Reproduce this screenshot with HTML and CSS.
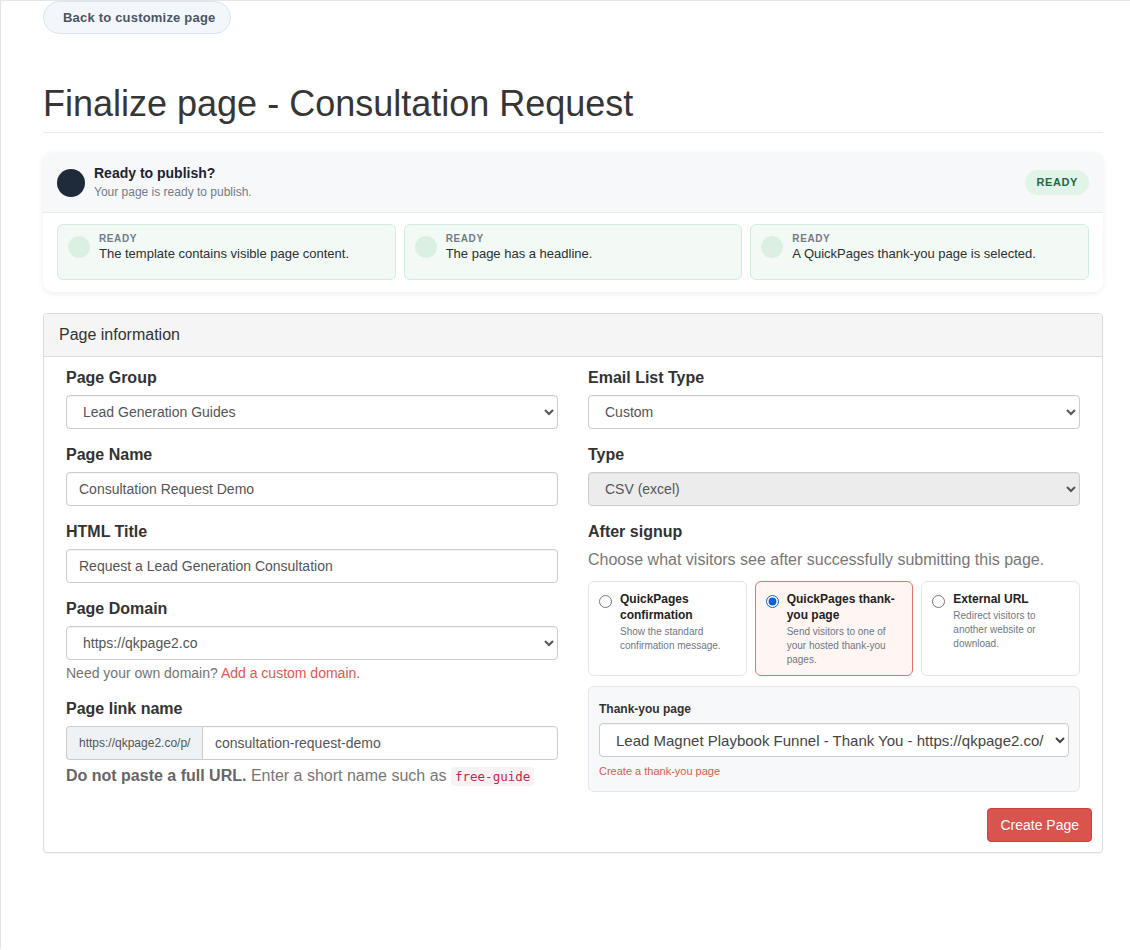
FILE: index.html
```html
<!DOCTYPE html>
<html lang="en">
<head>
  <meta charset="UTF-8">
  <meta name="viewport" content="width=device-width, initial-scale=1.0">
  <title>Finalize page - Consultation Request</title>
  <link rel="stylesheet" href="styles.css">
</head>
<body>
  <div class="container">
    <a class="back-btn" href="#">Back to customize page</a>

    <h1 class="page-title">Finalize page - Consultation Request</h1>

    <!-- publish readiness summary -->
    <div class="publish-card">
      <div class="publish-head">
        <span class="publish-dot"></span>
        <div class="publish-text">
          <div class="publish-title">Ready to publish?</div>
          <div class="publish-sub">Your page is ready to publish.</div>
        </div>
        <span class="badge-ready">READY</span>
      </div>
      <div class="check-list">
        <div class="check-item">
          <span class="check-dot"></span>
          <div>
            <div class="check-state">READY</div>
            <div class="check-msg">The template contains visible page content.</div>
          </div>
        </div>
        <div class="check-item">
          <span class="check-dot"></span>
          <div>
            <div class="check-state">READY</div>
            <div class="check-msg">The page has a headline.</div>
          </div>
        </div>
        <div class="check-item">
          <span class="check-dot"></span>
          <div>
            <div class="check-state">READY</div>
            <div class="check-msg">A QuickPages thank-you page is selected.</div>
          </div>
        </div>
      </div>
    </div>

    <div class="panel">
      <div class="panel-heading">Page information</div>
      <div class="panel-body">
        <div class="form-cols">
          <div class="form-col">
            <div class="form-group">
              <label class="control-label" for="pageGroup">Page Group</label>
              <select id="pageGroup" class="form-control">
                <option>Lead Generation Guides</option>
              </select>
            </div>
            <div class="form-group">
              <label class="control-label" for="pageName">Page Name</label>
              <input id="pageName" class="form-control" type="text" value="Consultation Request Demo">
            </div>
            <div class="form-group">
              <label class="control-label" for="htmlTitle">HTML Title</label>
              <input id="htmlTitle" class="form-control" type="text" value="Request a Lead Generation Consultation">
            </div>
            <div class="form-group">
              <label class="control-label" for="pageDomain">Page Domain</label>
              <select id="pageDomain" class="form-control">
                <option>https://qkpage2.co</option>
              </select>
              <p class="help-block">Need your own domain? <a href="#">Add a custom domain</a>.</p>
            </div>
            <div class="form-group">
              <label class="control-label" for="linkName">Page link name</label>
              <div class="input-group">
                <span class="input-addon">https://qkpage2.co/p/</span>
                <input id="linkName" class="form-control" type="text" value="consultation-request-demo">
              </div>
              <p class="help-link"><strong>Do not paste a full URL.</strong> Enter a short name such as <code>free-guide</code></p>
            </div>
          </div>

          <div class="form-col">
            <div class="form-group">
              <label class="control-label" for="listType">Email List Type</label>
              <select id="listType" class="form-control">
                <option>Custom</option>
              </select>
            </div>
            <div class="form-group">
              <label class="control-label" for="fileType">Type</label>
              <select id="fileType" class="form-control" disabled>
                <option>CSV (excel)</option>
              </select>
            </div>
            <div class="form-group">
              <label class="control-label">After signup</label>
              <p class="after-desc">Choose what visitors see after successfully submitting this page.</p>
              <div class="signup-options">
                <label class="signup-option">
                  <input type="radio" name="after">
                  <span>
                    <span class="option-title">QuickPages confirmation</span>
                    <span class="option-desc">Show the standard confirmation message.</span>
                  </span>
                </label>
                <label class="signup-option selected">
                  <input type="radio" name="after" checked>
                  <span>
                    <span class="option-title">QuickPages thank-you page</span>
                    <span class="option-desc">Send visitors to one of your hosted thank-you pages.</span>
                  </span>
                </label>
                <label class="signup-option">
                  <input type="radio" name="after">
                  <span>
                    <span class="option-title">External URL</span>
                    <span class="option-desc">Redirect visitors to another website or download.</span>
                  </span>
                </label>
              </div>
              <div class="thanks-box">
                <label class="thanks-label" for="thanksPage">Thank-you page</label>
                <select id="thanksPage" class="form-control thanks-select">
                  <option>Lead Magnet Playbook Funnel - Thank You - https://qkpage2.co/p/lead-magnet-playbook-thank-you</option>
                </select>
                <a class="thanks-link" href="#">Create a thank-you page</a>
              </div>
            </div>
          </div>
        </div>
        <div class="form-actions">
          <button class="btn-create" type="button">Create Page</button>
        </div>
      </div>
    </div>
  </div>
</body>
</html>
```

FILE: styles.css
```css
body {
  margin: 0;
  font-family: "Liberation Sans", Arial, sans-serif;
  font-size: 14px;
  color: #333;
  background: #fff;
  border-left: 1px solid #e3e3e3;
  border-top: 1px solid #e6e6e6;
  min-height: 949px;
  box-sizing: border-box;
}
.container {
  width: 1060px;
  margin-left: 42px;
}
.back-btn {
  display: inline-block;
  height: 33px;
  line-height: 31px;
  box-sizing: border-box;
  padding: 0 14px 0 19px;
  border: 1px solid #dbe3ec;
  border-radius: 17px;
  background: #f3f7fb;
  color: #4a5565;
  font-size: 13px;
  font-weight: bold;
  letter-spacing: 0.2px;
  text-decoration: none;
}
.page-title {
  margin: 48px 0 0;
  font-size: 36px;
  font-weight: normal;
  line-height: 44px;
  color: #363636;
  padding-bottom: 6px;
  border-bottom: 1px solid #eaeaea;
}

/* readiness card */
.publish-card {
  margin-top: 20px;
  border-radius: 10px;
  background: #fff;
  box-shadow: 0 1px 6px rgba(0, 0, 0, 0.08);
  overflow: hidden;
}
.publish-head {
  display: flex;
  align-items: center;
  padding: 0 14px;
  height: 59px;
  background: #f7f8fa;
  border-bottom: 1px solid #e6e9ed;
}
.publish-dot {
  width: 28px;
  height: 28px;
  border-radius: 50%;
  background: #1f2a3a;
  margin-right: 9px;
  margin-top: 1px;
}
.publish-text {
  flex: 1;
}
.publish-title {
  font-size: 14px;
  font-weight: bold;
  color: #1d2430;
  line-height: 19px;
}
.publish-sub {
  font-size: 12px;
  color: #737b87;
  line-height: 19px;
}
.badge-ready {
  display: inline-block;
  height: 25px;
  line-height: 25px;
  padding: 0 11px;
  border-radius: 13px;
  background: #e2f3e7;
  color: #22683f;
  font-size: 11px;
  font-weight: bold;
  letter-spacing: 0.6px;
  margin-top: -1px;
}
.check-list {
  display: grid;
  grid-template-columns: repeat(3, 1fr);
  gap: 8px;
  padding: 11px 14px 12px;
}
.check-item {
  display: flex;
  align-items: flex-start;
  height: 56px;
  box-sizing: border-box;
  padding: 8px 10px;
  border: 1px solid #d3ebdb;
  border-radius: 6px;
  background: #f3faf5;
}
.check-dot {
  flex: none;
  width: 22px;
  height: 22px;
  border-radius: 50%;
  background: #dcf0e2;
  margin: 3px 9px 0 0;
}
.check-state {
  font-size: 10px;
  font-weight: bold;
  color: #737b87;
  letter-spacing: 0.6px;
  line-height: 12px;
}
.check-msg {
  font-size: 13px;
  color: #2b2f36;
  line-height: 17px;
}

/* page information panel */
.panel {
  margin-top: 21px;
  border: 1px solid #dcdcdc;
  border-radius: 4px;
  box-shadow: 0 1px 1px rgba(0, 0, 0, 0.05);
}
.panel-heading {
  height: 42px;
  line-height: 42px;
  padding: 0 15px;
  background: #f5f5f5;
  border-bottom: 1px solid #dcdcdc;
  border-radius: 3px 3px 0 0;
  font-size: 16px;
  color: #333;
}
.panel-body {
  padding: 10px 10px 10px 22px;
}
.form-cols {
  display: grid;
  grid-template-columns: 492px 492px;
  gap: 30px;
}
.form-group {
  margin-bottom: 15px;
}
.control-label {
  display: block;
  font-size: 16px;
  font-weight: bold;
  line-height: 21px;
  margin-bottom: 7px;
  color: #333;
}
.form-control {
  display: block;
  width: 100%;
  height: 34px;
  box-sizing: border-box;
  padding: 6px 12px;
  border: 1px solid #ccc;
  border-radius: 4px;
  background: #fff;
  font-family: "Liberation Sans", Arial, sans-serif;
  font-size: 14px;
  color: #555;
  box-shadow: inset 0 1px 1px rgba(0, 0, 0, 0.04);
}
select.form-control {
  padding: 6px 8px 6px 12px;
}
select.form-control:disabled {
  background: #ececec;
  color: #555;
  opacity: 1;
}
.help-block {
  margin: 3px 0 0;
  font-size: 14px;
  line-height: 20px;
  color: #737373;
}
.help-block a,
.thanks-link {
  color: #e0594b;
  text-decoration: none;
}
.input-group {
  display: flex;
}
.input-addon {
  flex: none;
  width: 136px;
  height: 34px;
  line-height: 32px;
  box-sizing: border-box;
  padding-left: 12px;
  border: 1px solid #ccc;
  border-right: 0;
  border-radius: 4px 0 0 4px;
  background: #eef2f5;
  font-size: 12px;
  color: #555;
}
.input-group .form-control {
  border-radius: 0 4px 4px 0;
}
.help-link {
  margin: 5px 0 0;
  font-size: 16px;
  line-height: 22px;
  color: #777;
}
.help-link strong {
  color: #666;
}
code {
  font-family: "DejaVu Sans Mono", monospace;
  font-size: 12.5px;
  color: #c7254e;
  background: #f9f2f4;
  padding: 2px 4px;
  border-radius: 4px;
}
.after-desc {
  margin: 1px 0 10px;
  font-size: 16px;
  line-height: 22px;
  color: #777;
}

/* after signup choices */
.signup-options {
  display: grid;
  grid-template-columns: repeat(3, 1fr);
  gap: 8px;
}
.signup-option {
  display: flex;
  align-items: flex-start;
  height: 95px;
  box-sizing: border-box;
  padding: 9px 10px;
  border: 1px solid #e2e5ea;
  border-radius: 6px;
  background: #fff;
  cursor: pointer;
}
.signup-option.selected {
  border-color: #e57466;
  background: #fff6f4;
}
.signup-option input {
  flex: none;
  width: 13px;
  height: 13px;
  margin: 4px 8px 0 0;
  accent-color: #0b62d6;
}
.option-title {
  display: block;
  font-size: 12px;
  font-weight: bold;
  line-height: 16px;
  color: #222;
}
.option-desc {
  display: block;
  margin-top: 2px;
  font-size: 10px;
  line-height: 14px;
  color: #6f7782;
}
.thanks-box {
  margin-top: 10px;
  padding: 14px 10px 13px;
  border: 1px solid #e3e7eb;
  border-radius: 6px;
  background: #f7f8fa;
}
.thanks-label {
  display: block;
  font-size: 12px;
  font-weight: bold;
  line-height: 16px;
  margin-bottom: 6px;
  color: #333;
}
.thanks-select {
  font-size: 15px;
  color: #444;
  padding-left: 15px;
}
.thanks-link {
  display: block;
  margin-top: 7px;
  font-size: 11px;
  line-height: 14px;
}
.form-actions {
  display: flex;
  justify-content: flex-end;
  margin-top: 1px;
}
.btn-create {
  height: 34px;
  padding: 0 12px;
  border: 1px solid #d43f3a;
  border-radius: 4px;
  background: #d9534f;
  color: #fff;
  font-family: "Liberation Sans", Arial, sans-serif;
  font-size: 14px;
}
```
